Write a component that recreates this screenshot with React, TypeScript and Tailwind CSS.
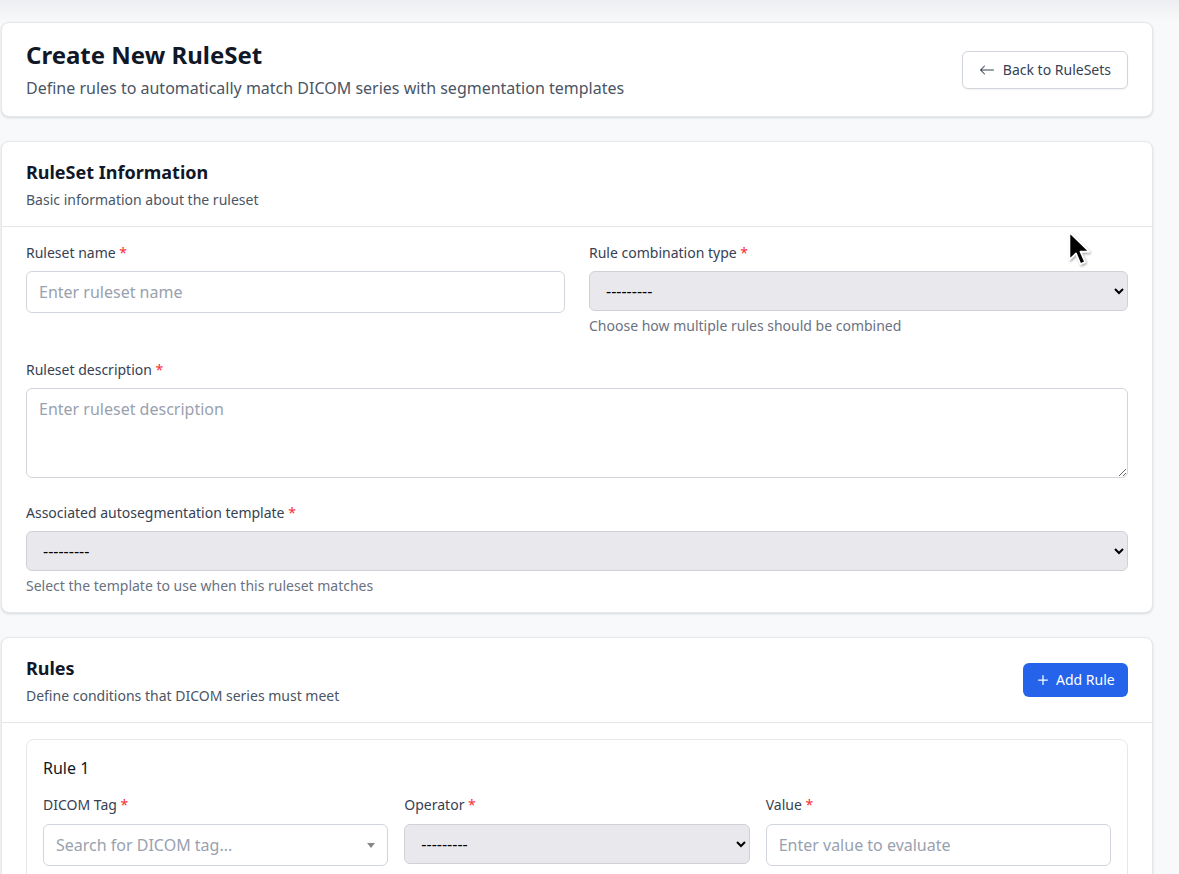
import { BsArrowLeft, BsPlus } from "react-icons/bs";

function Label({ text, gap = "mb-2" }: { text: string; gap?: string }) {
  return (
    <label className={`${gap} block text-sm leading-[21px] text-gray-700`}>
      {text} <span className="text-red-500">*</span>
    </label>
  );
}

const inputCls =
  "block h-[42px] w-full rounded-md border border-gray-300 bg-white px-3 text-base leading-6 text-gray-900 placeholder:text-gray-400 focus:outline-none";

const selectCls =
  "block h-10 w-full rounded-md border border-[#cfd1d7] bg-[#e9e9ed] px-3 text-base text-black";

function Select() {
  return (
    <select className={selectCls} defaultValue="">
      <option value="">---------</option>
    </select>
  );
}

function CardHeader({ title, subtitle, action }: any) {
  return (
    <div className="flex items-center justify-between border-b border-gray-200 px-6 pt-4 pb-4">
      <div>
        <h2 className="text-lg leading-7 font-bold text-gray-900">{title}</h2>
        <p className="mt-[3px] text-sm leading-[21px] text-gray-600">{subtitle}</p>
      </div>
      {action}
    </div>
  );
}

function Cursor() {
  return (
    <svg
      className="pointer-events-none absolute top-[231px] left-[1067px]"
      width="28"
      height="38"
      viewBox="0 0 28 38"
    >
      <defs>
        <filter id="cs" x="-30%" y="-30%" width="160%" height="160%">
          <feDropShadow dx="1" dy="1.5" stdDeviation="1" floodColor="#000" floodOpacity="0.35" />
        </filter>
      </defs>
      <path
        d="M2.5 1.5 L2.5 28.5 L9 22.3 L13.5 33 L18 31 L13.4 20.6 L22.3 20.6 Z"
        fill="#000"
        stroke="#fff"
        strokeWidth="1.6"
        strokeLinejoin="round"
        filter="url(#cs)"
      />
    </svg>
  );
}

export default function App() {
  return (
    <div className="relative h-screen overflow-hidden bg-[#f8f9fb] font-['Noto_Sans',sans-serif] text-gray-900">
      <div className="h-[22px] bg-linear-to-b from-[#eceef1] to-[#f8f9fb]" />
      <div className="pr-[26px] pl-px">
        {/* page header */}
        <div className="mb-6 flex items-center justify-between rounded-lg border border-gray-200 bg-white px-6 py-4 shadow-sm">
          <div>
            <h1 className="text-2xl leading-8 font-bold text-gray-900">Create New RuleSet</h1>
            <p className="mt-[5px] text-base leading-6 text-gray-600">
              Define rules to automatically match DICOM series with segmentation templates
            </p>
          </div>
          <button className="inline-flex h-[38px] items-center gap-2 rounded-md border border-gray-300 bg-white px-4 text-sm text-gray-700 shadow-xs">
            <BsArrowLeft size={16} />
            Back to RuleSets
          </button>
        </div>

        {/* ruleset info */}
        <div className="mb-6 rounded-lg border border-gray-200 bg-white shadow-sm">
          <CardHeader title="RuleSet Information" subtitle="Basic information about the ruleset" />
          <div className="px-6 pt-[15px] pb-4">
            <div className="mb-[23px] grid grid-cols-2 gap-6">
              <div>
                <Label text="Ruleset name" />
                <input className={inputCls} placeholder="Enter ruleset name" />
              </div>
              <div>
                <Label text="Rule combination type" />
                <Select />
                <p className="mt-1 text-sm leading-[21px] text-gray-500">
                  Choose how multiple rules should be combined
                </p>
              </div>
            </div>
            <div className="mb-6">
              <Label text="Ruleset description" />
              <textarea
                rows={3}
                className="block w-full rounded-md border border-gray-300 bg-white px-3 py-2 text-base leading-6 text-gray-900 placeholder:text-gray-400 focus:outline-none"
                placeholder="Enter ruleset description"
              />
            </div>
            <div>
              <Label text="Associated autosegmentation template" />
              <Select />
              <p className="mt-1 text-sm leading-[21px] text-gray-500">
                Select the template to use when this ruleset matches
              </p>
            </div>
          </div>
        </div>

        {/* rules */}
        <div className="rounded-lg border border-gray-200 bg-white shadow-sm">
          <CardHeader
            title="Rules"
            subtitle="Define conditions that DICOM series must meet"
            action={
              <button className="inline-flex h-[34px] w-[105px] items-center gap-[3px] rounded-md bg-[#2563eb] pl-[10px] text-sm text-white">
                <BsPlus size={20} />
                Add Rule
              </button>
            }
          />
          <div className="px-6 pt-4 pb-6">
            <div className="rounded-lg border border-gray-200 p-4">
              <h3 className="mb-3.5 text-base leading-6 text-gray-900">Rule 1</h3>
              <div className="grid grid-cols-3 gap-4">
                <div>
                  <Label text="DICOM Tag" gap="mb-[9px]" />
                  <div className="flex h-[42px] items-center rounded-md border border-gray-300 bg-white px-3">
                    <input
                      className="min-w-0 flex-1 bg-transparent text-base text-gray-900 placeholder:text-gray-400 focus:outline-none"
                      placeholder="Search for DICOM tag..."
                    />
                    <span className="h-0 w-0 border-x-4 border-t-[5px] border-x-transparent border-t-[#888]" />
                  </div>
                </div>
                <div>
                  <Label text="Operator" gap="mb-[9px]" />
                  <Select />
                </div>
                <div>
                  <Label text="Value" gap="mb-[9px]" />
                  <input className={inputCls} placeholder="Enter value to evaluate" />
                </div>
              </div>
            </div>
          </div>
        </div>
      </div>
      <Cursor />
    </div>
  );
}
